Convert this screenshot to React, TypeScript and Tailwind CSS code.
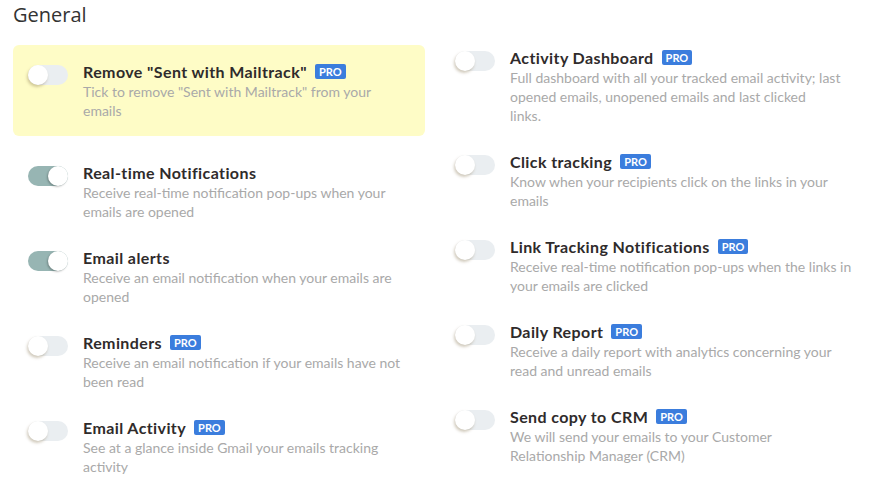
import React from 'react';

type Setting = {
  title: string;
  desc: string;
  pro?: boolean;
  on?: boolean;
  highlight?: boolean;
};

const LEFT: Setting[] = [
  { title: 'Remove "Sent with Mailtrack"', desc: 'Tick to remove "Sent with Mailtrack" from your emails', pro: true, highlight: true },
  { title: 'Real-time Notifications', desc: 'Receive real-time notification pop-ups when your emails are opened', on: true },
  { title: 'Email alerts', desc: 'Receive an email notification when your emails are opened', on: true },
  { title: 'Reminders', desc: 'Receive an email notification if your emails have not been read', pro: true },
  { title: 'Email Activity', desc: 'See at a glance inside Gmail your emails tracking activity', pro: true },
];

const RIGHT: Setting[] = [
  { title: 'Activity Dashboard', desc: 'Full dashboard with all your tracked email activity; last opened emails, unopened emails and last clicked\nlinks.', pro: true },
  { title: 'Click tracking', desc: 'Know when your recipients click on the links in your emails', pro: true },
  { title: 'Link Tracking Notifications', desc: 'Receive real-time notification pop-ups when the links in your emails are clicked', pro: true },
  { title: 'Daily Report', desc: 'Receive a daily report with analytics concerning your read and unread emails', pro: true },
  { title: 'Send copy to CRM', desc: 'We will send your emails to your Customer\nRelationship Manager (CRM)', pro: true },
];

const Toggle = ({ on }: { on?: boolean }) => (
  <div className={`relative w-[40px] h-[20px] rounded-full shrink-0 mt-[4px] ${on ? 'bg-[#97b5b3]' : 'bg-[#eaeef1]'}`}>
    <div
      className={`absolute top-0 w-[20px] h-[20px] rounded-full bg-white ${
        on ? 'right-0 shadow-[-1px_1px_2px_rgba(0,0,0,0.25)]' : 'left-0 shadow-[-1px_2px_3px_rgba(120,100,60,0.35)]'
      }`}
    />
  </div>
);

const Pro = () => (
  <span className="ml-[8px] inline-flex items-center h-[15px] px-[4px] rounded-[2px] bg-[#3b7ddd] text-white text-[11px] font-bold leading-none">
    PRO
  </span>
);

const Item = ({ s, width }: { s: Setting; width: string }) => (
  <div className={`flex gap-[15px] ${s.highlight ? 'bg-[#fefcc6] rounded-[6px] px-[15px] py-[16px]' : 'px-[15px]'}`}>
    <Toggle on={s.on} />
    <div className={`min-w-0 ${width}`}>
      <div className="flex items-center h-[21px]">
        <span className="text-[16px] font-bold text-[#2f2b2b] tracking-[0.4px]">{s.title}</span>
        {s.pro && <Pro />}
      </div>
      <p className="text-[14px] leading-[19px] text-[#a9a9a9] whitespace-pre-line">{s.desc}</p>
    </div>
  </div>
);

export default function App() {
  return (
    <div className="w-[871px] h-[503px] bg-white overflow-hidden font-['Lato','Open_Sans',sans-serif]">
      <h1 className="pl-[13px] pt-[3px] text-[20px] leading-[24px] text-[#333] font-['Open_Sans',sans-serif]">General</h1>
      <div className="grid grid-cols-[412px_1fr] gap-[15px] pl-[13px] pt-[18px]">
        <div className="flex flex-col gap-[26px]">
          {LEFT.map(s => <Item key={s.title} s={s} width="w-[325px]" />)}
        </div>
        <div className="flex flex-col gap-[26px] pt-[2px]">
          {RIGHT.map(s => <Item key={s.title} s={s} width="w-[345px]" />)}
        </div>
      </div>
    </div>
  );
}
